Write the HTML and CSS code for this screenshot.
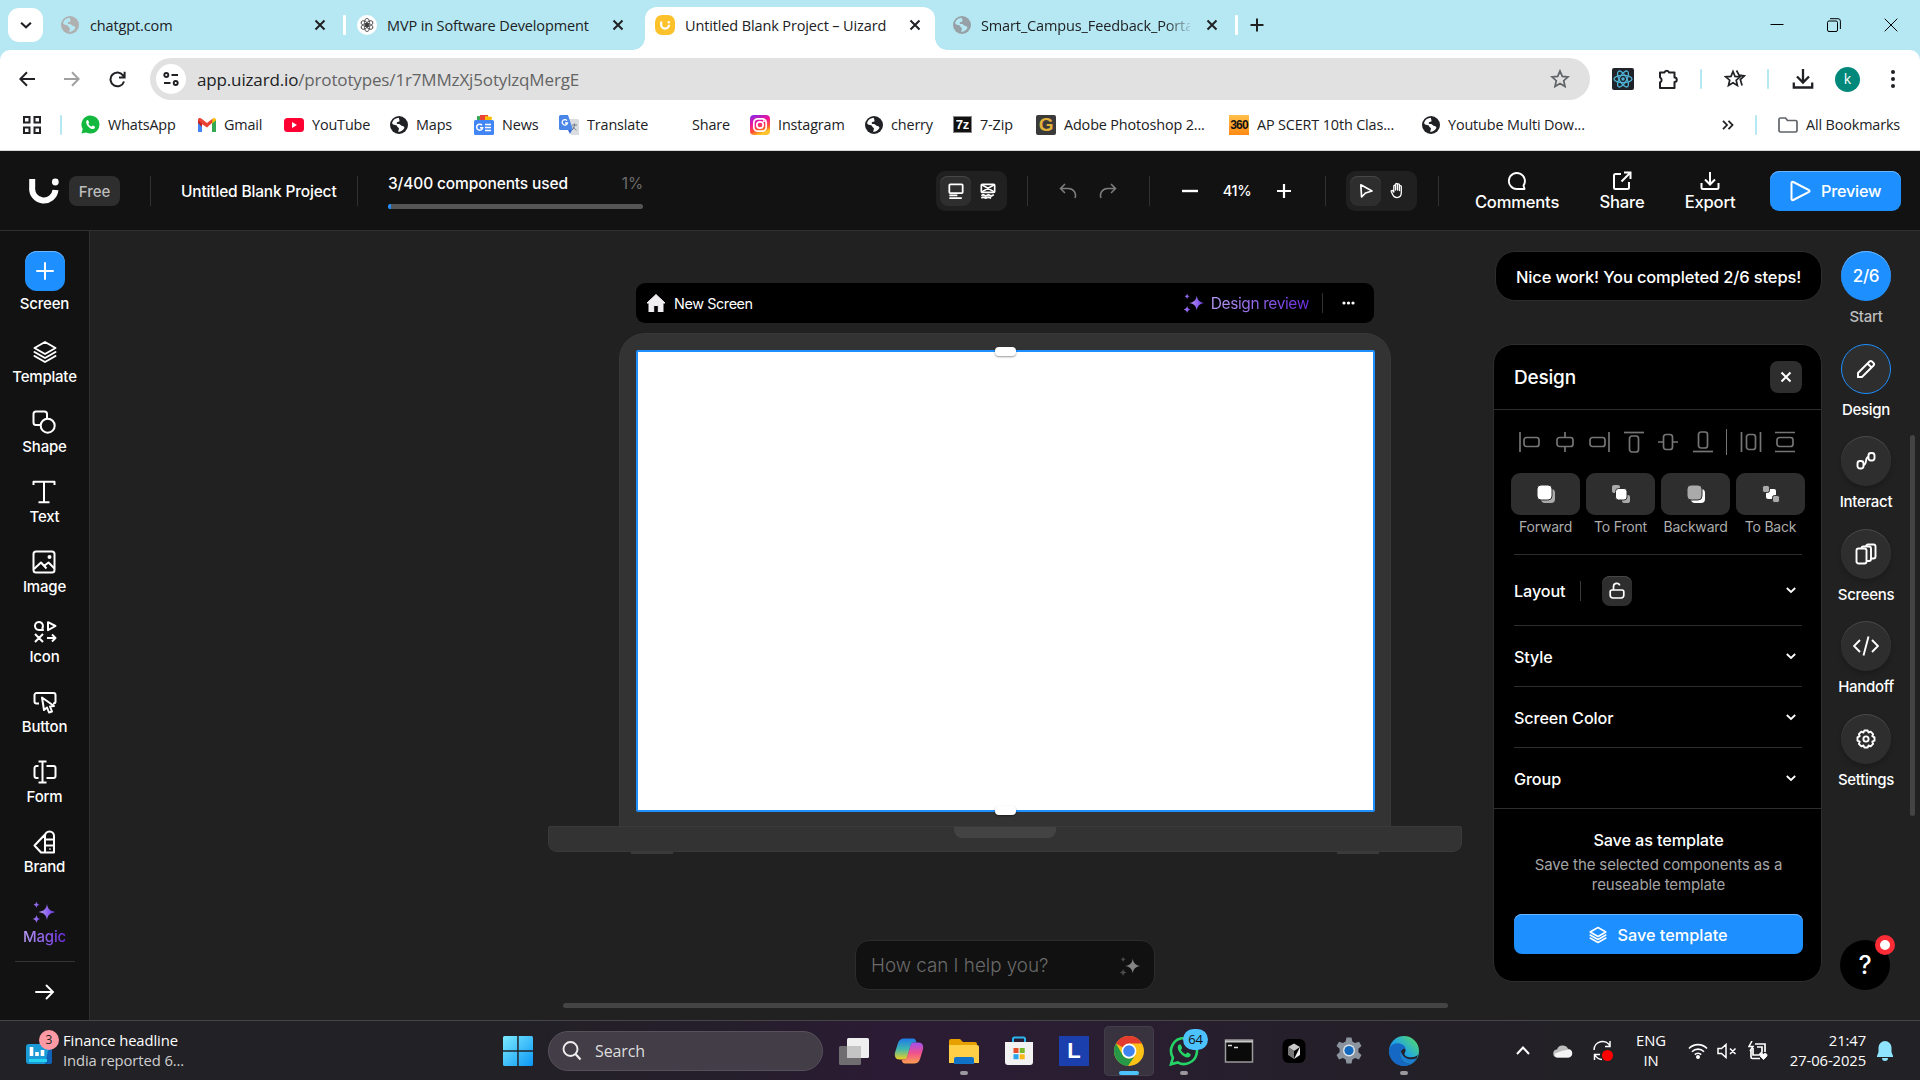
FILE: index.html
```html
<!DOCTYPE html>
<html lang="en">
<head>
<meta charset="utf-8">
<title>Untitled Blank Project – Uizard</title>
<link rel="stylesheet" href="styles.css">
</head>
<body>
<svg class="defs" width="0" height="0" aria-hidden="true">
  <defs>
    <linearGradient id="violet" x1="0" x2="1"><stop offset="0" stop-color="#b79af5"/><stop offset="1" stop-color="#6a35e8"/></linearGradient>
    <linearGradient id="win" x1="0" y1="0" x2="1" y2="1"><stop offset="0" stop-color="#7ceaff"/><stop offset="1" stop-color="#0a97f5"/></linearGradient>
    <linearGradient id="insta" x1="0" y1="0" x2="0.4" y2="1"><stop offset="0" stop-color="#7a2bf0"/><stop offset=".45" stop-color="#f2149a"/><stop offset=".8" stop-color="#ff5a2a"/><stop offset="1" stop-color="#ffc42a"/></linearGradient>
    <linearGradient id="edge" x1="0" y1="1" x2="1" y2="0"><stop offset="0" stop-color="#0f5fc0"/><stop offset=".5" stop-color="#22a5e0"/><stop offset="1" stop-color="#5be35a"/></linearGradient>
    <linearGradient id="copA" x1="0" y1="0" x2="0" y2="1"><stop offset="0" stop-color="#1e7be8"/><stop offset=".5" stop-color="#3fb6b0"/><stop offset="1" stop-color="#f0d020"/></linearGradient>
    <linearGradient id="copB" x1="0" y1="0" x2="0" y2="1"><stop offset="0" stop-color="#a050f0"/><stop offset=".5" stop-color="#f0508c"/><stop offset="1" stop-color="#ffa050"/></linearGradient>
  </defs>
  <symbol id="globe" viewBox="0 0 18 18"><circle cx="9" cy="9" r="9"/><path d="M8.8 1.8C6 2 3 3.500 2 7c.8 2.200 2.800 2 4 2.200s1.200 1.600 1.800 2c.9.500 1.500 1 1 2l-.6 2.900c3.200-.2 5.300-2.300 6.300-4.300-.5-1.400-1.400-1.800-2.900-2-1.200-.4-1.300-1.500-2.600-1.700-1.100-.2-2 .1-2.300-.8-.2-1 .7-1.500 1.600-1.600.9 0 1.300-.4 1.200-1.300z" fill="var(--land,#fff)"/></symbol>
  <symbol id="x" viewBox="0 0 12 12"><path d="M1.500 1.500l9 9M10.500 1.500l-9 9" fill="none" stroke="currentColor" stroke-width="2"/></symbol>
  <symbol id="spark" viewBox="0 0 24 24"><path d="M15 4c.8 4.800 3 7.200 8.500 8-5.500.8-7.700 3.200-8.500 8-.8-4.800-3-7.200-8.500-8 5.500-.8 7.700-3.200 8.500-8z"/><path d="M4.500 1.500c.4 2 1.200 2.800 3 3.200-1.800.4-2.600 1.200-3 3.200-.4-2-1.200-2.800-3-3.200 1.800-.4 2.600-1.200 3-3.200zM4.500 15c.5 2.400 1.400 3.500 3.800 4-2.400.5-3.300 1.600-3.800 4-.5-2.400-1.400-3.500-3.800-4 2.400-.5 3.300-1.600 3.800-4z" opacity="var(--dim,1)"/></symbol>
  <symbol id="layers" viewBox="0 0 24 24"><path d="M12 2L1.500 8 12 14l10.500-6zM1.500 12L12 18l10.500-6M1.500 16L12 22l10.500-6" fill="none" stroke="currentColor" stroke-width="2" stroke-linejoin="round" stroke-linecap="round"/></symbol>
  <symbol id="chev" viewBox="0 0 12 12"><path d="M1.800 4L6 8l4.200-4" fill="none" stroke="currentColor" stroke-width="1.800"/></symbol>
</svg>

<header class="tabs">
  <div class="tab-search"><svg width="14" height="14"><use href="#chev"/></svg></div>
  <div class="tab tab-a"><svg class="grey" width="18" height="18"><use href="#globe"/></svg><span class="t">chatgpt.com</span><svg class="tx" width="12" height="12"><use href="#x"/></svg></div>
  <i class="tsep"></i>
  <div class="tab tab-b"><svg width="20" height="20" viewBox="0 0 20 20"><circle cx="10" cy="10" r="10" fill="#fff"/><g fill="none" stroke="#333" stroke-width=".8"><ellipse cx="10" cy="7.200" rx="2.400" ry="3.800"/><ellipse cx="10" cy="7.200" rx="2.400" ry="3.800" transform="rotate(60 10 10)"/><ellipse cx="10" cy="7.200" rx="2.400" ry="3.800" transform="rotate(120 10 10)"/><ellipse cx="10" cy="7.200" rx="2.400" ry="3.800" transform="rotate(180 10 10)"/><ellipse cx="10" cy="7.200" rx="2.400" ry="3.800" transform="rotate(240 10 10)"/><ellipse cx="10" cy="7.200" rx="2.400" ry="3.800" transform="rotate(300 10 10)"/></g></svg><span class="t">MVP in Software Development</span><svg class="tx" width="12" height="12"><use href="#x"/></svg></div>
  <div class="tab tab-c"><svg width="20" height="20" viewBox="0 0 20 20"><rect width="20" height="20" rx="7" fill="#fdc12c"/><path d="M6.200 6.500v3.200a3.900 3.900 0 0 0 7.800 0" fill="none" stroke="#fff" stroke-width="2.200"/><circle cx="13.800" cy="7.200" r="1.200" fill="#fff"/></svg><span class="t">Untitled Blank Project – Uizard</span><svg class="tx" width="12" height="12"><use href="#x"/></svg></div>
  <div class="tab tab-d"><svg class="grey2" width="18" height="18"><use href="#globe"/></svg><span class="t fade">Smart_Campus_Feedback_Porta</span><svg class="tx" width="12" height="12"><use href="#x"/></svg></div>
  <i class="tsep"></i>
  <svg class="plus" width="14" height="14" viewBox="0 0 14 14"><path d="M7 .5v13M.5 7h13" stroke="#222" stroke-width="2"/></svg>
  <div class="win">
    <svg width="14" height="14" viewBox="0 0 14 14"><path d="M.5 6.500h13" stroke="#000"/></svg>
    <svg width="14" height="14" viewBox="0 0 14 14" fill="none" stroke="#000"><rect x=".5" y="3" width="10" height="10.500" rx="1.500"/><path d="M3 .7h8a2.400 2.400 0 0 1 2.400 2.400V11"/></svg>
    <svg width="14" height="14" viewBox="0 0 14 14"><path d="M.7.700l12.600 12.600M13.300.7L.7 13.300" stroke="#000"/></svg>
  </div>
</header>

<div class="chrome">
  <div class="toolbar">
    <svg class="nav" width="16" height="16" viewBox="0 0 16 16"><path d="M16 8H1.500M8 1.200L1.300 8 8 14.800" fill="none" stroke="#202124" stroke-width="2"/></svg>
    <svg class="nav" width="16" height="16" viewBox="0 0 16 16"><path d="M0 8h14.500M8 1.200L14.700 8 8 14.800" fill="none" stroke="#a0a0a0" stroke-width="2"/></svg>
    <svg class="nav" width="17" height="17" viewBox="0 0 17 17"><path d="M15 10.500A6.900 6.900 0 1 1 14 4.300l1.500 1.700M15.600.8v5.600H10" fill="none" stroke="#202124" stroke-width="2"/></svg>
    <div class="url">
      <span class="site"><svg width="16" height="16" viewBox="0 0 16 16" fill="none" stroke="#202124" stroke-width="1.900"><circle cx="3.300" cy="4" r="2"/><path d="M8.500 4H15M1 12h6.500"/><circle cx="12.700" cy="12" r="2"/></svg></span>
      <span class="addr">app.uizard.io<em>/prototypes/1r7MMzXj5otylzqMergE</em></span>
      <svg class="star" width="20" height="20" viewBox="0 0 20 20"><path d="M10 2l2.300 5.400 5.700.5-4.300 3.800 1.300 5.700-5-3-5 3 1.300-5.700L2 7.900l5.700-.5z" fill="none" stroke="#5f6368" stroke-width="1.700"/></svg>
    </div>
    <svg class="ext" width="22" height="22" viewBox="0 0 22 22"><rect width="22" height="22" rx="2" fill="#20232a"/><g fill="none" stroke="#4fb3d6" stroke-width="1.300"><ellipse cx="11" cy="11" rx="9" ry="3.600"/><ellipse cx="11" cy="11" rx="9" ry="3.600" transform="rotate(60 11 11)"/><ellipse cx="11" cy="11" rx="9" ry="3.600" transform="rotate(120 11 11)"/></g><circle cx="11" cy="11" r="1.700" fill="#4fb3d6"/></svg>
    <svg class="ext puz" width="22" height="22" viewBox="0 0 22 22"><path d="M3 4.500h4.500a2.300 2.300 0 0 1 4.500 0h5.500v5a2.200 2.200 0 0 1 0 4.500v6H3v-5.500a2.900 2.900 0 0 0 0-5.200z" fill="none" stroke="#202124" stroke-width="2" stroke-linejoin="round"/></svg>
    <i class="bsep"></i>
    <svg class="ext" width="22" height="22" viewBox="0 0 22 22"><path d="M9 3.500l2 4.900 5.200.4-4 3.400 1.200 5.300L9 14.700l-4.500 2.800 1.200-5.300-4-3.400 5.300-.4zM12.500 2.500L15 7l5.500.8-4.200 3.800 1.800 6" fill="none" stroke="#202124" stroke-width="1.700"/></svg>
    <i class="bsep"></i>
    <svg class="ext dl" width="22" height="22" viewBox="0 0 22 22"><path d="M11 1v13M5 8.500l6 6 6-6M1.800 14.500v5h18.400v-5" fill="none" stroke="#202124" stroke-width="2.300"/></svg>
    <span class="avatar">k</span>
    <svg class="ext" width="6" height="20" viewBox="0 0 6 20" fill="#202124"><circle cx="3" cy="3" r="2"/><circle cx="3" cy="10" r="2"/><circle cx="3" cy="17" r="2"/></svg>
  </div>
  <nav class="marks">
    <svg width="18" height="18" viewBox="0 0 18 18" fill="none" stroke="#202124" stroke-width="2"><path d="M1 1h5.500v5.500H1zM11.500 1H17v5.500h-5.500zM1 11.500h5.500V17H1zM11.500 11.500H17V17h-5.500z"/></svg>
    <i class="bsep"></i>
    <a><svg width="19" height="19" viewBox="0 0 20 20"><path d="M10 .5a9.500 9.500 0 0 1 0 19c-1.700 0-3.200-.4-4.600-1.200L.5 19.500l1.300-4.700A9.500 9.500 0 0 1 10 .5z" fill="#12b93e"/><path d="M7 5.200c-.6 0-1.600.9-1.600 2.300 0 3 4.300 7.200 7 7.200 1.200 0 2.300-.8 2.300-2.200 0-.4-2-1.500-2.400-1.400-.5.100-.8 1.100-1.200 1.100-.9 0-3.300-2.300-3.300-3 0-.4.800-.8.700-1.400-.1-.5-.9-2.600-1.500-2.600z" fill="#fff"/></svg>WhatsApp</a>
    <a><svg width="18" height="14" viewBox="0 0 18 14"><path d="M0 14V2h4v12z" fill="#4285f4"/><path d="M14 14V2h4v12z" fill="#34a853"/><path d="M0 2C0 0 2-.5 3.300.600L9 5l5.700-4.400L14 5 9 9.500 0 3.500z" fill="#ea4335"/><path d="M14 5.500L14.700.6C16-.5 18 0 18 2.200z" fill="#fbbc04"/><path d="M0 2.500l4 3V9L0 5z" fill="#c5221f"/></svg>Gmail</a>
    <a><svg width="20" height="14" viewBox="0 0 20 14"><rect width="20" height="14" rx="3.500" fill="#f03"/><path d="M8 4l5 3-5 3z" fill="#fff"/></svg>YouTube</a>
    <a><svg width="18" height="18" fill="#202124"><use href="#globe"/></svg>Maps</a>
    <a><svg width="20" height="20" viewBox="0 0 20 20"><path d="M3 1l13 1v8H3z" fill="#34a853"/><path d="M6 0h8v5H6z" fill="#ea4335"/><path d="M11 1l7 1-1 6h-6z" fill="#fbbc04"/><rect y="5" width="20" height="15" rx="1.500" fill="#4285f4"/><path d="M11 9.500h6M11 12.500h6M11 15.500h6M8 10.300a3 3 0 1 0 .6 2.500H6" stroke="#fff" stroke-width="1.500" fill="none"/></svg>News</a>
    <a><svg width="20" height="20" viewBox="0 0 20 20"><path d="M8 4h10a2 2 0 0 1 2 2v14h-8z" fill="#dadce0"/><path d="M1.500 0H9l5 15H1.500A1.500 1.500 0 0 1 0 13.500v-12A1.500 1.500 0 0 1 1.500 0z" fill="#4a86e8"/><path d="M9 15h4l-2 4z" fill="#3367d6"/><path d="M8 5.700a2.700 2.700 0 1 0 .5 2.300H6" stroke="#fff" stroke-width="1.300" fill="none"/><path d="M13 10h5M15.500 8.500V10c0 2-1 4-2.500 5M14 11.500c.6 1.500 2 3 3.500 3.500" stroke="#6f7b88" fill="none"/></svg>Translate</a>
    <a>Share</a>
    <a><svg width="20" height="20" viewBox="0 0 20 20"><rect width="20" height="20" rx="4" fill="url(#insta)"/><g fill="none" stroke="#fff" stroke-width="1.700"><rect x="3.800" y="3.800" width="12.400" height="12.400" rx="4"/><circle cx="10" cy="10" r="3.200"/></g><circle cx="13.800" cy="6.200" r="1" fill="#fff"/></svg>Instagram</a>
    <a><svg width="18" height="18" fill="#202124"><use href="#globe"/></svg>cherry</a>
    <a><span class="ico-7z">7z</span>7-Zip</a>
    <a><span class="ico-g">G</span>Adobe Photoshop 2...</a>
    <a><span class="ico-360">360</span>AP SCERT 10th Clas...</a>
    <a><svg width="18" height="18" fill="#202124"><use href="#globe"/></svg>Youtube Multi Dow...</a>
    <svg width="12" height="10" viewBox="0 0 12 10"><path d="M1 .8L5 5 1 9.200M6.500.8l4 4.200-4 4.200" fill="none" stroke="#202124" stroke-width="1.800"/></svg>
    <i class="bsep"></i>
    <a><svg width="20" height="16" viewBox="0 0 20 16"><path d="M1 2.500A1.500 1.500 0 0 1 2.500 1h5l2 2.500h8A1.500 1.500 0 0 1 19 5v8.500a1.500 1.500 0 0 1-1.500 1.500h-15A1.500 1.500 0 0 1 1 13.500z" fill="none" stroke="#5f6368" stroke-width="1.700"/></svg>All Bookmarks</a>
  </nav>
</div>

<div class="topbar">
  <svg class="logo" width="30" height="26" viewBox="0 0 30 26"><path d="M3.200 1v8.500a11.500 11.500 0 0 0 23.300 2.500" fill="none" stroke="#fff" stroke-width="6"/><circle cx="26.300" cy="4" r="3.400" fill="#fff"/></svg>
  <span class="free">Free</span>
  <i class="vs"></i>
  <span class="pname">Untitled Blank Project</span>
  <i class="vs"></i>
  <div class="usage"><div class="urow"><span>3/400 components used</span><b>1%</b></div><div class="ubar"><i></i></div></div>
  <div class="toggle tg1">
    <span class="on"><svg width="16" height="16" viewBox="0 0 18 18" fill="none" stroke="#fff" stroke-width="2"><rect x="1.500" y="1.500" width="15" height="10" rx="1"/><path d="M1.500 14h9M1.500 17h14"/></svg></span>
    <span><svg width="16" height="16" viewBox="0 0 18 18" fill="none" stroke="#fff" stroke-width="1.900"><rect x="1.500" y="1.500" width="15" height="9" rx="1"/><path d="M2 2l14 8M16 2L2 10M1.500 14.300l2-1.200 3 1.500 3-1.500 3 1.500 3-1.500M1.500 17l2-1 3 1 3-1 3 1"/></svg></span>
  </div>
  <i class="vs"></i>
  <svg class="undo" width="18" height="16" viewBox="0 0 18 16"><path d="M6 1L1.500 5.500 6 10M1.500 5.500H9A7 7 0 0 1 16 15" fill="none" stroke="#7c7c7c" stroke-width="1.600"/></svg>
  <svg class="redo" width="18" height="16" viewBox="0 0 18 16"><path d="M12 1l4.500 4.500L12 10M16.500 5.500H9A7 7 0 0 0 2 15" fill="none" stroke="#7c7c7c" stroke-width="1.600"/></svg>
  <i class="vs"></i>
  <svg class="zm" width="16" height="14" viewBox="0 0 16 14"><path d="M0 7h16" stroke="#fff" stroke-width="2.400"/></svg>
  <span class="zoom">41%</span>
  <svg class="zm" width="14" height="14" viewBox="0 0 14 14"><path d="M0 7h14M7 0v14" stroke="#fff" stroke-width="2.200"/></svg>
  <i class="vs"></i>
  <div class="toggle tg2">
    <span class="on"><svg width="16" height="16" viewBox="0 0 16 16"><path d="M2.800 1.800L3.600 14 7.500 10 14 8z" fill="none" stroke="#fff" stroke-width="1.700" stroke-linejoin="round"/></svg></span>
    <span><svg width="15" height="17" viewBox="0 0 15 17"><path d="M3.800 10V4.200c0-1.300 1.800-1.300 1.800 0V8 2.500c0-1.400 1.900-1.400 1.900 0V8 2.800c0-1.300 1.900-1.300 1.900 0V8.500 4.500c0-1.300 1.900-1.200 1.900.1v6c0 3-1.700 5-4.400 5-2.500 0-3.600-1.700-4.300-3.200L1.300 9.800c-.5-1.200 1-1.700 1.700-.8z" fill="none" stroke="#fff" stroke-width="1.300" stroke-linejoin="round"/></svg></span>
  </div>
  <i class="vs"></i>
  <div class="act act1"><svg width="20" height="20" viewBox="0 0 20 20"><path d="M17.500 18H10A8 8 0 1 1 16.500 14.500z" fill="none" stroke="#fff" stroke-width="1.900" stroke-linejoin="round"/></svg>Comments</div>
  <div class="act act2"><svg width="20" height="20" viewBox="0 0 20 20"><path d="M9 3H3.500A1.500 1.500 0 0 0 2 4.500v12A1.500 1.500 0 0 0 3.500 18h12a1.500 1.500 0 0 0 1.500-1.500V11M12 1.500h6.500V8M18 2l-8.500 8.500" fill="none" stroke="#fff" stroke-width="2"/></svg>Share</div>
  <div class="act act3"><svg width="20" height="20" viewBox="0 0 20 20"><path d="M10 1v12M5 8.500l5 5 5-5M1.500 12v4.500A1.500 1.500 0 0 0 3 18h14a1.500 1.500 0 0 0 1.500-1.500V12" fill="none" stroke="#fff" stroke-width="2"/></svg>Export</div>
  <div class="preview"><svg width="22" height="22" viewBox="0 0 22 22"><path d="M2.500 3v16a1.200 1.200 0 0 0 1.800 1L20 12a1.200 1.200 0 0 0 0-2L4.300 2a1.200 1.200 0 0 0-1.800 1z" fill="none" stroke="#fff" stroke-width="2"/></svg>Preview</div>
</div>

<main class="work">
  <aside class="side">
    <div class="tool first"><span class="add"><svg width="18" height="18" viewBox="0 0 18 18"><path d="M9 1v16M1 9h16" stroke="#fff" stroke-width="2" stroke-linecap="round"/></svg></span>Screen</div>
    <div class="tool"><svg width="26" height="26"><use href="#layers"/></svg>Template</div>
    <div class="tool"><svg viewBox="0 0 24 24"><rect x="1.500" y="1.500" width="13.500" height="13.500" rx="2.500"/><circle cx="15.700" cy="15.700" r="7" fill="#121212"/></svg>Shape</div>
    <div class="tool"><svg viewBox="0 0 24 24"><path d="M1.500 5V1.700h21V5M12 1.700v20.600M6.500 22.300h11"/></svg>Text</div>
    <div class="tool"><svg viewBox="0 0 24 24"><rect x="1.500" y="1.500" width="21" height="21" rx="2.500"/><path d="M2 19l7-6.500 5.500 6M12 16l4.500-3.500 6 6"/><circle cx="17.500" cy="7" r="1" fill="#fff"/></svg>Image</div>
    <div class="tool"><svg viewBox="0 0 24 24"><path d="M10 10H6a4 4 0 1 1 3.300-1.800zM15 2.200v8L22.500 6zM2 14l8 8M10 14l-8 8M14 18h8.500M19 14.500l3.500 3.500-3.500 3.500"/></svg>Icon</div>
    <div class="tool"><svg viewBox="0 0 24 24"><path d="M6 13.500H3.500a2 2 0 0 1-2-2V5a2 2 0 0 1 2-2h17a2 2 0 0 1 2 2v6.500a2 2 0 0 1-2 2H20M9 7.500l2 12.500 3-2.500 2 5 3-1-2-5 4-.5z"/></svg>Button</div>
    <div class="tool"><svg viewBox="0 0 24 24"><path d="M5.500 18H3.500a2 2 0 0 1-2-2V8a2 2 0 0 1 2-2h2M13.500 6h7a2 2 0 0 1 2 2v8a2 2 0 0 1-2 2h-7M9.500 2v20M5.500 1.500h8M5.500 22.500h8"/></svg>Form</div>
    <div class="tool"><svg viewBox="0 0 24 24"><path d="M12 22.500V6a4.500 4.500 0 0 1 9 0v16.500zM12 9.500h9M12 15.500h9M12 4.500L1.500 15.500l6.500 7h4M16.500 19h1"/></svg>Brand</div>
    <div class="tool"><svg width="24" height="24" class="sp"><use href="#spark" fill="url(#violet)"/></svg><span class="vio">Magic</span></div>
    <i class="sline"></i>
    <svg class="sarrow" width="20" height="16" viewBox="0 0 20 16"><path d="M1 8h17M11.500 1.500L18 8l-6.500 6.500" fill="none" stroke="#fff" stroke-width="1.900" stroke-linecap="round"/></svg>
  </aside>

  <section class="canvas">
    <div class="scrbar">
      <svg width="18" height="18" viewBox="0 0 18 18"><path d="M9 .5L0 9h2v9h4.700v-6.500h4.600V18H16V9h2z" fill="#f2eff2" stroke="#f2eff2" stroke-linejoin="round"/></svg>
      <span>New Screen</span>
      <svg class="sp2" width="22" height="22"><use href="#spark" fill="url(#violet)"/></svg>
      <span class="vio review">Design review</span>
      <i class="vs sv"></i>
      <svg class="dots" width="13" height="4" viewBox="0 0 13 4" fill="#fff"><circle cx="2" cy="2" r="1.600"/><circle cx="6.500" cy="2" r="1.600"/><circle cx="11" cy="2" r="1.600"/></svg>
    </div>
    <div class="lid"><div class="page"><i class="grip gt"></i><i class="grip gb"></i></div></div>
    <div class="base"><i></i></div>
    <div class="feet"><i></i><i></i></div>
    <div class="ask"><span>How can I help you?</span><svg width="22" height="22"><use href="#spark" fill="#858585"/></svg></div>
    <div class="hscroll"></div>
  </section>

  <section class="right">
    <div class="col">
      <div class="toast">Nice work! You completed 2/6 steps!</div>
      <div class="panel">
        <div class="phead">Design<span class="pclose"><svg width="12" height="12"><use href="#x"/></svg></span></div>
        <div class="aligns">
          <svg viewBox="0 0 22 22"><path d="M1 1v20"/><rect x="5" y="6.500" width="15" height="9" rx="2.500"/></svg>
          <svg viewBox="0 0 22 22"><path d="M11 1v5M11 16v5"/><rect x="3" y="6.500" width="16" height="9" rx="2.500"/></svg>
          <svg viewBox="0 0 22 22"><path d="M21 1v20"/><rect x="2" y="6.500" width="15" height="9" rx="2.500"/></svg>
          <svg viewBox="0 0 22 22"><path d="M1 1.500h20"/><rect x="6.500" y="5" width="9" height="16" rx="2.500"/></svg>
          <svg viewBox="0 0 22 22"><path d="M1 11h5M16 11h5"/><rect x="6.500" y="3.500" width="9" height="15" rx="2.500"/></svg>
          <svg viewBox="0 0 22 22"><path d="M1 20.500h20"/><rect x="6.500" y="1" width="9" height="16" rx="2.500"/></svg>
          <i></i>
          <svg viewBox="0 0 22 22"><path d="M1.500 1v20M20.500 1v20"/><rect x="6.500" y="3.500" width="9" height="15" rx="2.500"/></svg>
          <svg viewBox="0 0 22 22"><path d="M1 1.500h20M1 20.500h20"/><rect x="3" y="6.500" width="16" height="9" rx="2.500"/></svg>
        </div>
        <div class="orders">
          <div><span><svg viewBox="0 0 20 20"><rect x="5" y="5" width="14" height="14" rx="4" fill="#aaa"/><rect x="1" y="1" width="15" height="15" rx="4" fill="#fff" stroke="#2e2e2e"/></svg></span>Forward</div>
          <div><span><svg viewBox="0 0 20 20"><rect x="1" y="1" width="8" height="8" rx="2" fill="#aaa"/><rect x="11" y="11" width="8" height="8" rx="2" fill="#aaa"/><rect x="4.500" y="4.500" width="11.500" height="11.500" rx="3" fill="#fff" stroke="#2e2e2e"/></svg></span>To Front</div>
          <div><span><svg viewBox="0 0 20 20"><rect x="5" y="5" width="14" height="14" rx="4" fill="#fff"/><rect x="1" y="1" width="15" height="15" rx="4" fill="#aaa" stroke="#2e2e2e"/></svg></span>Backward</div>
          <div><span><svg viewBox="0 0 20 20"><rect x="5" y="5" width="10" height="10" rx="2" fill="#fff"/><rect x="1.500" y="1.500" width="7" height="7" rx="2" fill="#aaa" stroke="#2e2e2e"/><rect x="11.500" y="11.500" width="7" height="7" rx="2" fill="#aaa" stroke="#2e2e2e"/></svg></span>To Back</div>
        </div>
        <div class="sec lay">Layout<i></i><span class="lock"><svg width="16" height="18" viewBox="0 0 16 18"><path d="M4.500 8V4.700a3.300 3.300 0 0 1 6.300-1.400M3 8h10a1.800 1.800 0 0 1 1.800 1.800v3.400A3 3 0 0 1 12 16H4a3 3 0 0 1-2.800-2.800V9.800A1.800 1.800 0 0 1 3 8z" fill="none" stroke="#fff" stroke-width="1.700"/></svg></span><svg class="cv" width="12" height="12"><use href="#chev"/></svg></div>
        <div class="sec">Style<svg class="cv" width="12" height="12"><use href="#chev"/></svg></div>
        <div class="sec">Screen Color<svg class="cv" width="12" height="12"><use href="#chev"/></svg></div>
        <div class="sec">Group<svg class="cv" width="12" height="12"><use href="#chev"/></svg></div>
        <div class="save">
          <h4>Save as template</h4>
          <p>Save the selected components as a<br>reuseable template</p>
          <div class="sbtn"><svg width="18" height="18"><use href="#layers"/></svg>Save template</div>
        </div>
      </div>
    </div>
    <div class="dock">
      <div class="dk start"><span>2/6</span>Start</div>
      <div class="dk sel"><span><svg viewBox="0 0 20 20"><path d="M2 18v-4L13.500 2.500a1.800 1.800 0 0 1 2.500 0l1.500 1.500a1.800 1.800 0 0 1 0 2.500L6 18zM11.500 4.500l4 4"/></svg></span>Design</div>
      <div class="dk"><span><svg viewBox="0 0 20 20"><rect x="1.500" y="10" width="6" height="7.500" rx="2.500"/><rect x="12.500" y="2" width="6" height="7.500" rx="2.500"/><path d="M7.500 14c4 0 1-8 5-8"/></svg></span>Interact</div>
      <div class="dk"><span><svg class="scr" viewBox="0 0 22 22"><rect x="11" y="1.500" width="9.500" height="14" rx="2"/><rect x="6.500" y="3.500" width="9.500" height="14.500" rx="2"/><rect x="1.500" y="5.500" width="10" height="15" rx="2"/></svg></span>Screens</div>
      <div class="dk"><span><svg class="wide" viewBox="0 0 26 20"><path d="M7 4L1 10l6 6M19 4l6 6-6 6M15.500.5L10.500 19.500"/></svg></span>Handoff</div>
      <div class="dk"><span><svg viewBox="0 0 20 20"><path d="M8.300 1.500h3.400l.8 2 2.200-.8 2.400 2.400-.8 2.100 2.200 1.100v3.400l-2.200 1 .8 2.200-2.400 2.400-2.200-.8-.8 2H8.300l-.8-2-2.200.8-2.400-2.400.8-2.200-2.200-1V8.300l2.200-1.100-.8-2.100 2.400-2.400 2.200.8z" stroke-linejoin="round"/><circle cx="10" cy="10" r="2.600"/></svg></span>Settings</div>
      <div class="help">?<i></i></div>
    </div>
    <div class="vscroll"></div>
  </section>
</main>

<footer class="task">
  <div class="widget">
    <svg width="32" height="32" viewBox="0 0 32 32"><rect x="1" y="9" width="26" height="20" rx="3" fill="#1a9ad6"/><path d="M27 12v14a3 3 0 0 1-3 3h-4l4-17z" fill="#0f62b8"/><path d="M6.500 12v9M12 17v4M17.500 15v6" stroke="#fff" stroke-width="3.600"/><path d="M4 25.500h18" stroke="#25d4f0" stroke-width="3"/></svg>
    <i class="pink">3</i>
    <div><b>Finance headline</b><span>India reported 6...</span></div>
  </div>
  <svg class="start-ico" width="30" height="30" viewBox="0 0 30 30"><path d="M0 1.500A1.500 1.500 0 0 1 1.500 0h12.700v14.200H0zM15.700 0h12.800A1.500 1.500 0 0 1 30 1.500v12.700H15.700zM0 15.700h14.200V30H1.500A1.500 1.500 0 0 1 0 28.500zM15.700 15.700H30v12.800a1.500 1.500 0 0 1-1.500 1.500H15.700z" fill="url(#win)"/></svg>
  <div class="search"><svg width="20" height="20" viewBox="0 0 20 20"><circle cx="8.500" cy="8" r="7" fill="none" stroke="#eee" stroke-width="1.900"/><path d="M13.500 13l5 5.500" stroke="#eee" stroke-width="2.200"/></svg>Search</div>
  <div class="apps">
    <span><svg viewBox="0 0 30 30"><rect x="8" y="2" width="22" height="20" rx="1.500" fill="#efefef"/><rect y="10" width="22" height="19" rx="1.500" fill="#777" opacity=".9"/><rect x="8" y="10" width="14" height="12" fill="#c4c4c4"/></svg></span>
    <span><svg viewBox="0 0 30 30"><path d="M10 2.500h9c2 0 2.800 1.500 3.500 4h-2.500c-2 0-2.800 1.200-3.500 3.500l-3 10.500c-.6 2-1.500 3-3.500 3H5.500C1.500 23.500 0 20 1.200 16L4 7c1-3 3-4.500 6-4.500z" fill="url(#copA)"/><path d="M20 27.500h-9c-2 0-2.800-1.500-3.500-4H10c2 0 2.800-1.200 3.500-3.500l3-10.500c.6-2 1.500-3 3.500-3h4.500c4 0 5.500 3.500 4.300 7.500L26 23c-1 3-3 4.500-6 4.500z" fill="url(#copB)"/></svg></span>
    <span class="dot"><svg viewBox="0 0 30 30"><path d="M0 5a2 2 0 0 1 2-2h9l3 3h12a2 2 0 0 1 2 2v6H0z" fill="#e8a000"/><path d="M0 9h28a2 2 0 0 1 2 2v16H0z" fill="#ffcf48"/><path d="M5 23a2 2 0 0 1 2-2h16a2 2 0 0 1 2 2v5H5z" fill="#1173c7"/></svg></span>
    <span><svg viewBox="0 0 30 30"><path d="M9 7V3a1.500 1.500 0 0 1 1.500-1.500h9A1.500 1.500 0 0 1 21 3v4" fill="none" stroke="#29b5f0" stroke-width="2"/><path d="M1 6h28v20a3 3 0 0 1-3 3H4a3 3 0 0 1-3-3z" fill="#f2f2f2"/><path d="M9.500 12h5v5h-5z" fill="#e5502a"/><path d="M15.700 12h5v5h-5z" fill="#7ab82c"/><path d="M9.500 18.200h5v5h-5z" fill="#2aa4ea"/><path d="M15.700 18.200h5v5h-5z" fill="#f8b818"/></svg></span>
    <span><em class="ell">L</em></span>
    <span class="cur"><svg viewBox="0 0 30 30"><circle cx="15" cy="15" r="15" fill="#fbc116"/><path d="M15 15L2 7.500A15 15 0 0 1 28 7.500H15z" fill="#e33b2e"/><path d="M2 7.500A15 15 0 0 0 14 30l7.500-11.200A7.500 7.500 0 0 1 8.500 18.700z" fill="#279847"/><circle cx="15" cy="15" r="7.400" fill="#fff"/><circle cx="15" cy="15" r="5.800" fill="#3f83f0"/></svg></span>
    <span class="dot"><svg viewBox="0 0 30 30"><path d="M15 2a13 13 0 1 1-6.300 24.400L2 28.300l1.900-6.600A13 13 0 0 1 15 2z" fill="none" stroke="#25d366" stroke-width="2.600"/><path d="M11 8.300c-.9 0-2.300 1.200-2.300 3.200 0 4.200 6 10 9.800 10 1.800 0 3.200-1.200 3.200-3 0-.6-2.700-2.100-3.300-2-.7.200-1.100 1.500-1.700 1.500-1.200 0-4.600-3.200-4.600-4.100 0-.6 1.100-1.100 1-2-.1-.7-1.200-3.600-2.100-3.600z" fill="#25d366"/></svg><i class="n64">64</i></span>
    <span><svg viewBox="0 0 30 30"><rect x="1.500" y="4" width="27" height="22" fill="#0a0a0a" stroke="#9a9a9a" stroke-width="1.500"/><path d="M1 5.500h28" stroke="#c9c9c9" stroke-width="2"/><path d="M4 9.500h4M10 11.500h4" stroke="#ddd" stroke-width="1.400"/></svg></span>
    <span><svg viewBox="0 0 30 30"><rect x="3.500" y="3" width="23" height="24" rx="6" fill="#000"/><path d="M15 7.500l6 3.500-6 4-6-4z" fill="#c9c9c9"/><path d="M9 11l6 4v8l-6-4z" fill="#777"/><path d="M21 11v8l-6 4z" fill="#eee"/></svg></span>
    <span><svg viewBox="0 0 30 30"><path d="M12.500 1.500h5l.9 4 2.600 1.500 4-1.300 2.500 4.400-3.100 2.700v3.500l3.100 2.700-2.500 4.400-4-1.300-2.600 1.500-.9 4h-5l-.9-4L9 22.100l-4 1.300L2.500 19l3.100-2.700v-3.500L2.500 10 5 5.700l4 1.300 2.600-1.500z" fill="#8b949e"/><circle cx="15" cy="14.500" r="6" fill="#dfe5ea"/><circle cx="15" cy="14.500" r="4.600" fill="#1269bd"/></svg></span>
    <span class="dot"><svg viewBox="0 0 30 30"><circle cx="15" cy="15" r="15" fill="url(#edge)"/><path d="M12 15c-3 5 1 13 10 13a15 15 0 0 1-7 2A15 15 0 0 1 .1 14C1 8 8 6 12 8c4 1.500 5 4 4.500 6-1.500-1-3.500-.5-4.500 1z" fill="#1568c4"/><path d="M16 13c1.500 2-.5 3.500-.5 5 0 2 3 3.500 7 3.200 3-.2 5-1.200 6.500-2.500A15 15 0 0 1 22 28c-9 0-13-8-10-13 1-1.500 3-3 4-2z" fill="#23202b"/><path d="M12 15c-3 5 1 13 10 13 3-1.500 4.500-3.500 5.700-5.700-8 3-14.500-1-15.700-7.300z" fill="#1c7fd0"/></svg></span>
  </div>
  <div class="tray">
    <svg width="14" height="9" viewBox="0 0 14 9"><path d="M1 8l6-6.500L13 8" fill="none" stroke="#fff" stroke-width="2"/></svg>
    <svg width="20" height="14" viewBox="0 0 20 14"><path d="M4.500 13.500a4 4 0 0 1-.5-8A6 6 0 0 1 15 4.800a4.400 4.400 0 0 1 .5 8.700z" fill="#bdbdbd"/><path d="M4.500 13.500C2 13.500 1 11 2 9.500 6 8 14 5 17.500 6c3 2 2 7-2 7.500z" fill="#f5f5f5"/></svg>
    <svg width="22" height="22" viewBox="0 0 22 22"><path d="M2 10A8.500 8.500 0 0 1 18 6M18 1v5.500h-5M10 19.500A8.500 8.500 0 0 1 3 15M2.500 20v-5.500H8" fill="none" stroke="#fff" stroke-width="1.500"/><circle cx="15.500" cy="15.500" r="5.500" fill="#f00"/></svg>
    <div class="lang">ENG<br>IN</div>
    <svg width="20" height="17" viewBox="0 0 20 17" fill="none" stroke="#fff" stroke-width="1.600"><path d="M1 6.500a12.500 12.500 0 0 1 18 0M4 9.700a8.300 8.300 0 0 1 12 0M6.800 12.600a4.500 4.500 0 0 1 6.400 0"/><circle cx="10" cy="15" r="1.200" fill="#fff"/></svg>
    <svg width="20" height="16" viewBox="0 0 20 16" fill="none" stroke="#fff" stroke-width="1.500"><path d="M1 5.500h3.500L9 1.500v13l-4.500-4H1zM13 5.500l5.500 5.500M18.500 5.500L13 11"/></svg>
    <svg width="21" height="20" viewBox="0 0 21 20" fill="none" stroke="#fff" stroke-width="1.700"><path d="M7 3h10v8M3 9v7a1.500 1.500 0 0 0 1.500 1.500H12M5 7v7h6l3-3V6H9"/><path d="M4 0L1 5.500h4L2 10" stroke-width="1.500"/><path d="M15.500 18.500l-3.300-3.500c-.8-2.500 2-3.500 3.300-1.700 1.300-1.800 4.100-.8 3.300 1.700z" fill="#fff" stroke-width="1"/></svg>
    <div class="clock">21:47<br>27-06-2025</div>
    <svg width="16" height="20" viewBox="0 0 16 20"><path d="M8 0a6.500 6.500 0 0 1 6.500 6.500V11L16 15v1H0v-1l1.500-4V6.500A6.500 6.500 0 0 1 8 0zM5 17h6a3 3 0 0 1-6 0z" fill="#8fe4ff"/></svg>
  </div>
</footer>
</body>
</html>
```
FILE: styles.css
```css
* { box-sizing: border-box; }
html, body { margin: 0; width: 1920px; height: 1080px; overflow: hidden; background: #212121; }
body { display: flex; flex-direction: column; font-family: "Open Sans", "Noto Sans", sans-serif; color: #202124; }
svg { display: block; flex: none; }
.defs { position: absolute; }
i, em { font-style: normal; }

/* tab strip */
.tabs { position: relative; z-index: 1; height: 50px; background: #b5e8f2; display: flex; flex: none; align-items: center; padding-left: 8px; font-size: 14.500px; letter-spacing: -.13px; }
.tab-search { width: 35px; height: 34px; border-radius: 11px; background: #fff; display: flex; align-items: center; justify-content: center; }
.tab { display: flex; align-items: center; height: 43px; white-space: nowrap; position: relative; }
.tab .t { flex: 1; margin-left: 11px; overflow: hidden; }
.tx { margin-left: 10px; }
.grey { fill: #b0b0b0; --land: #b5e8f2; }
.grey2 { fill: #97a0a6; --land: #b5e8f2; }
.tab-a { width: 265px; margin-left: 18px; }
.tab-b { width: 267px; margin-left: 11px; }
.tab-b .t, .tab-c .t { margin-left: 10px; }
.tab-c { width: 290px; height: 43px; align-self: flex-end; margin-left: 21px; background: #fff; border-radius: 12px 12px 0 0; padding: 0 14px 7px 10px; }
.tab-c::before, .tab-c::after { content: ""; position: absolute; bottom: 0; width: 12px; height: 12px; }
.tab-c::before { left: -12px; background: radial-gradient(circle at 0 0, transparent 11.500px, #fff 12px); }
.tab-c::after { right: -12px; background: radial-gradient(circle at 100% 0, transparent 11.500px, #fff 12px); }
.tab-d { width: 265px; margin-left: 18px; }
.fade { -webkit-mask-image: linear-gradient(90deg, #000 88%, transparent 102%); mask-image: linear-gradient(90deg, #000 88%, transparent 102%); }
.tab-d .t { margin-left: 10px; }
.tab-d .tx { margin-left: 16px; }
.tsep { width: 3px; height: 20px; background: #fff; border-radius: 1px; margin-left: 17px; }
.plus { margin-left: 12px; }
.win { display: flex; gap: 43px; margin-left: auto; padding-right: 22px; }

/* browser toolbar */
.chrome { flex: none; height: 101px; background: #fff; border-bottom: 1px solid #d5d8d8; border-radius: 10px 10px 0 0; box-shadow: 0 -10px 0 #b5e8f2; position: relative; }
.toolbar { height: 58px; display: flex; align-items: center; padding: 0 0 0 19px; }
.nav { margin-right: 29px; }
.nav:nth-child(3) { margin-right: 23px; }
.url { width: 1440px; height: 42px; border-radius: 21px; background: #e1e1e1; display: flex; flex: none; align-items: center; padding: 0 20px 0 6px; margin-left: 1px; }
.site { width: 30px; height: 30px; border-radius: 50%; background: #fff; display: flex; align-items: center; justify-content: center; }
.addr { margin-left: 11px; flex: 1; font-size: 17px; letter-spacing: -.15px; color: #202124; }
.addr em { color: #646464; }
.ext { margin-left: 22px; }
.ext.puz { margin-left: 23px; }
.ext.dl { margin-left: 23px; }
.toolbar .bsep { margin-left: 21px; }
.bsep { width: 2px; height: 20px; background: #b5e8f2; border-radius: 1px; flex: none; }
.avatar { width: 25px; height: 25px; border-radius: 50%; background: #00897b; color: #fff; font-size: 14px; line-height: 23px; text-align: center; margin-left: 21px; }
.avatar + .ext { margin-left: 30px; }
.marks { height: 34px; display: grid; align-items: center; white-space: nowrap; font-size: 14.400px; letter-spacing: -.14px; padding-left: 23px;
  grid-template-columns: 37px 21px 117px 86px 106px 84px 85px 133px 58px 115px 88px 83px 193px 193px 300px 33px 23px 130px; }
.marks a { display: flex; align-items: center; gap: 8px; line-height: 20px; margin-top: -1px; }
.ico-7z { width: 19px; height: 17px; background: #111; border: 1px solid #888; outline: 1px solid #111; outline-offset: -3px; color: #fff; font: bold 13px/15px "Liberation Sans", sans-serif; text-align: center; }
.ico-g { width: 20px; height: 20px; background: #3a3a3a; color: #e2b13a; font: bold 19px/20px "Liberation Sans", sans-serif; text-align: center; border-radius: 2px; }
.ico-360 { width: 20px; height: 20px; background: linear-gradient(#ffc04a, #ff8a14); color: #111; font: bold 12px/20px "Liberation Sans Narrow", "Liberation Sans", sans-serif; letter-spacing: -.8px; text-align: center; }

/* editor top bar */
.topbar, .work { font-family: Inter, "Liberation Sans", sans-serif; font-weight: 500; color: #fff; }
.topbar { flex: none; height: 80px; background: #121212; border-bottom: 1px solid #2f2f2f; display: flex; align-items: center; padding-left: 28px; white-space: nowrap; }
.logo { margin-left: 1px; margin-right: -1px; }
.free { margin-left: 11px; width: 51px; height: 30px; border-radius: 8px; background: #2e2e2e; color: #bdbdbd; font-size: 15px; line-height: 31px; text-align: center; }
.vs { width: 1px; height: 30px; background: #313131; flex: none; }
.free + .vs { margin-left: 30px; }
.pname { width: 176px; margin-left: 30px; font-size: 15.500px; letter-spacing: -.17px; padding-top: 1px; }
.usage { width: 255px; margin-left: 30px; height: 36px; }
.urow { display: flex; justify-content: space-between; font-size: 15.500px; line-height: 22px; letter-spacing: -.12px; }
.urow b { font-weight: 400; color: #6c6c6c; }
.ubar { height: 5px; margin-top: 9px; border-radius: 3px; background: #555; overflow: hidden; }
.ubar i { display: block; width: 3px; height: 5px; background: #1e8fff; }
.toggle { width: 71px; height: 40px; border-radius: 9px; background: #202020; display: flex; align-items: center; padding: 0 4px; gap: 1px; }
.toggle span { width: 31px; height: 30px; border-radius: 8px; display: flex; align-items: center; justify-content: center; }
.toggle .on { background: #2e2e2e; box-shadow: inset 0 1px 0 #474747; }
.tg1 { margin-left: 293px; }
.tg1 + .vs { margin-left: 20px; }
.undo { margin-left: 31px; }
.redo { margin-left: 22px; }
.redo + .vs { margin-left: 32px; }
.zm { margin-left: 32px; }
.zoom { width: 30px; margin-left: 24px; font-size: 14.500px; letter-spacing: -.3px; text-align: center; }
.zoom + .zm { margin-left: 25px; }
.zoom + .zm + .vs { margin-left: 34px; }
.tg2 { margin-left: 20px; }
.tg2 + .vs { margin-left: 21px; }
.act { display: flex; flex-direction: column; align-items: center; gap: 1px; font-size: 16.600px; line-height: 20px; letter-spacing: -.2px; padding-top: 1px; }
.act1 { width: 86px; margin-left: 35px; }
.act2 { width: 46px; margin-left: 39px; }
.act3 { width: 52px; margin-left: 39px; }
.preview { margin-left: 34px; width: 131px; height: 40px; border-radius: 9px; background: #1e8fff; box-shadow: inset 0 1px 0 #6bb5ff; display: flex; align-items: center; gap: 10px; padding-left: 19px; font-size: 16.300px; letter-spacing: -.25px; }

/* workspace: panels share the canvas cell and float over it */
.work { flex: none; height: 789px; display: grid; grid-template-columns: 90px 1fr; background: #212121; }
.side { background: #121212; border-right: 1px solid #2f2f2f; display: flex; flex-direction: column; align-items: center; padding-top: 20px; font-size: 15px; letter-spacing: -.2px; }
.tool { height: 70px; display: flex; flex-direction: column; align-items: center; line-height: 20px; }
.tool svg { width: 24px; height: 24px; margin: 10px 0 3px; fill: none; stroke: #fff; stroke-width: 2; stroke-linejoin: round; }
.tool .sp { stroke: none; }
.tool.first { height: 79px; }
.add { width: 40px; height: 40px; border-radius: 12px; background: #1e8fff; box-shadow: inset 0 1px 0 #6bb5ff; display: flex; align-items: center; justify-content: center; margin-bottom: 3px; }
.tool .add svg { width: 18px; height: 18px; margin: 0; }
.vio { background: linear-gradient(90deg, #b79af5, #6a2be0); -webkit-background-clip: text; background-clip: text; color: transparent; }
.sline { width: 60px; height: 1px; background: #333; margin-top: 1px; }
.sarrow { margin-top: 22px; }

.canvas { grid-area: 1 / 2; display: flex; flex-direction: column; align-items: center; padding-top: 52px; }
.scrbar { width: 738px; height: 40px; border-radius: 9px; background: #000; display: flex; align-items: center; padding: 0 19px 0 11px; font-size: 14.400px; letter-spacing: -.4px; font-weight: 400; }
.scrbar span { margin-left: 9px; }
.sp2 { margin-left: auto; }
.scrbar .review { margin-left: 6px; font-size: 15.500px; }
.sv { height: 20px; margin: 0 19px 0 13px; }
.lid { width: 772px; height: 493px; margin-top: 10px; padding: 16px 0 0 16px; border-radius: 26px 26px 0 0; background: #333; border: 1px solid #383838; border-bottom: 0; }
.page { position: relative; height: 462px; width: 739px; background: #fff; border: 2px solid #1e8fff; border-radius: 2px; }
.grip { position: absolute; left: 357px; width: 21px; height: 9px; border-radius: 4px; background: #fff; box-shadow: 0 1px 2px rgba(0,0,0,.4); }
.gt { top: -5px; } .gb { bottom: -5px; }
.base { width: 914px; height: 26px; background: #333; border: 1px solid #3a3a3a; border-radius: 2px 2px 9px 9px; display: flex; justify-content: center; }
.base i { width: 102px; height: 11px; background: #434343; border-radius: 0 0 8px 8px; }
.feet { width: 748px; display: flex; justify-content: space-between; }
.feet i { width: 42px; height: 2px; background: #3a3a3a; }
.ask { width: 300px; height: 50px; margin-top: 86px; border: 1px solid #2c2c2c; border-radius: 14px; background: #111; display: flex; align-items: center; justify-content: space-between; padding: 1px 13px 0 15px; font-size: 18.800px; font-weight: 300; color: #6a6a6a; --dim: .5; }
.hscroll { width: 885px; height: 5px; border-radius: 3px; background: #444; margin-top: 13px; }

.right { grid-area: 1 / 2; justify-self: end; display: flex; padding-top: 20px; }
.col { width: 328px; }
.toast { width: 327px; height: 50px; margin-left: 1px; border: 1px solid #2d2d2d; border-radius: 20px; background: #000; text-align: center; line-height: 50px; font-size: 16.500px; letter-spacing: -.15px; white-space: nowrap; }
.panel { margin: 43px 0 0 -1px; width: 329px; height: 638px; border: 1px solid #2d2d2d; border-radius: 20px; background: #000; }
.phead { height: 65px; border-bottom: 1px solid #2d2d2d; display: flex; align-items: center; justify-content: space-between; padding: 0 19px 0 20px; font-size: 19px; letter-spacing: -.2px; }
.pclose { width: 32px; height: 32px; border-radius: 8px; background: #2e2e2e; display: flex; align-items: center; justify-content: center; }
.aligns { height: 63px; display: flex; align-items: center; padding: 1px 0 0 25px; gap: 12.500px; }
.aligns svg { width: 22px; height: 22px; fill: none; stroke: #757575; stroke-width: 1.700; }
.aligns i { width: 1px; height: 26px; background: #757575; }
.orders { display: flex; gap: 6px; padding-left: 17px; height: 81px; font-size: 14px; font-weight: 400; letter-spacing: -.2px; color: #adadad; }
.orders div { width: 69px; text-align: center; line-height: 24px; white-space: nowrap; }
.orders span { display: flex; align-items: center; justify-content: center; height: 42px; border-radius: 9px; background: #2e2e2e; }
.orders svg { width: 20px; height: 20px; }
.sec { height: 61px; margin: 0 19px 0 20px; border-top: 1px solid #2d2d2d; padding-top: 2px; display: flex; align-items: center; font-size: 16.200px; letter-spacing: -.1px; }
.lay { height: 71px; padding-top: 1px; }
.lay i { width: 1px; height: 20px; background: #3a3a3a; margin-left: 14px; }
.lock { width: 30px; height: 30px; margin-left: 21px; border-radius: 8px; background: #2e2e2e; box-shadow: inset 0 1px 0 #474747; display: flex; align-items: center; justify-content: center; }
.cv { margin: 0 5px 2px auto; }
.save { border-top: 1px solid #2d2d2d; padding: 20px 18px 0 20px; text-align: center; }
.save h4 { margin: 0; font-weight: 500; font-size: 16.300px; line-height: 22px; letter-spacing: -.15px; }
.save p { margin: 4px 0 19px; font-size: 15px; font-weight: 400; line-height: 20px; letter-spacing: -.12px; color: #a5a5a5; white-space: nowrap; }
.sbtn { height: 40px; border-radius: 8px; background: #1e8fff; box-shadow: inset 0 1px 0 #6bb5ff; display: flex; align-items: center; justify-content: center; gap: 10px; font-size: 16.300px; padding-top: 1px; }
.dock { width: 88px; font-size: 15px; letter-spacing: -.3px; display: flex; flex-direction: column; align-items: center; }
.dk { height: 92.500px; display: flex; flex-direction: column; align-items: center; line-height: 20px; }
.dk span { width: 50px; height: 50px; border-radius: 50%; background: #2e2e2e; box-shadow: inset 0 1px 0 #484848, 0 3px 5px rgba(0,0,0,.2); display: flex; align-items: center; justify-content: center; margin-bottom: 6px; }
.dk svg { width: 20px; height: 20px; fill: none; stroke: #fff; stroke-width: 1.900; }
.dk .wide { width: 26px; }
.dk .scr { width: 22px; height: 22px; fill: #2e2e2e; }
.start { color: #bdbdbd; }
.dk.start span { background: #1e8fff; box-shadow: inset 0 1px 0 #6bb5ff; color: #fff; font-size: 17px; }
.dk.sel span { border: 1px solid #1e8fff; box-shadow: none; }
.help { position: relative; width: 50px; height: 50px; margin: 134px 2px 0 0; border-radius: 50%; background: #000; font-size: 25px; line-height: 50px; text-align: center; }
.help i { position: absolute; right: -5px; top: -5px; width: 20px; height: 20px; border-radius: 50%; border: 5px solid #fb2c36; background: #fff; }
.vscroll { width: 5px; height: 381px; margin: 184px 5px 0 0; background: #444; border-radius: 3px; }

/* taskbar */
.task { flex: none; height: 60px; border-top: 1px solid #47454a; background: linear-gradient(90deg, #222126 0, #222126 26%, #251e2b 38%, #2b1b34 46%, #2a1e32 56%, #241f29 70%, #222126 82%); color: #fff; display: flex; align-items: center; font-size: 14.800px; letter-spacing: -.1px; white-space: nowrap; }
.widget { position: relative; display: flex; align-items: center; width: 478px; padding-left: 25px; }
.widget div { margin-left: 6px; line-height: 20px; margin-top: -2px; }
.widget b { display: block; font-weight: 400; }
.widget span { color: #cfcfcf; }
.pink { position: absolute; left: 39px; top: -2px; width: 20px; height: 20px; border-radius: 50%; background: #ff99a4; color: #222; font-size: 12px; line-height: 19px; text-align: center; }
.start-ico { margin-left: 25px; }
.search { width: 275px; height: 40px; margin-left: 15px; border-radius: 20px; background: #433d48; border: 1px solid #57515b; display: flex; align-items: center; gap: 13px; padding-left: 13px; font-size: 16px; color: #ddd; }
.apps { display: flex; gap: 5px; margin-left: 6px; }
.apps span { width: 50px; height: 50px; position: relative; display: flex; align-items: center; justify-content: center; border-radius: 5px; }
.apps svg { width: 30px; height: 30px; }
.apps .cur { background: #393340; box-shadow: inset 0 0 0 1px #433d49; }
.dot::after, .cur::after { content: ""; position: absolute; left: 21px; bottom: 1px; width: 8px; height: 4px; border-radius: 2px; background: #9a979d; }
.apps .cur::after { left: 15px; width: 20px; background: #4cc2ff; }
.ell { width: 30px; height: 30px; background: #1c3fae; font: bold 22px/30px "Liberation Sans", sans-serif; text-align: center; }
.n64 { position: absolute; left: 24px; top: 3px; width: 25px; height: 21px; border-radius: 11px; background: #4cc2ff; color: #111; font-size: 13px; line-height: 20px; text-align: center; }
.tray { display: grid; align-items: center; margin-left: 87px; grid-template-columns: 37px 39px 44px 52px 29px 31px 22px 98px 26px; justify-items: start; }
.lang { width: 30px; text-align: center; line-height: 20px; margin-top: -1px; }
.clock { width: 97px; padding-right: 1px; text-align: right; line-height: 20px; margin-top: -2px; }
.tray svg:last-child { margin-left: 9px; }
```
